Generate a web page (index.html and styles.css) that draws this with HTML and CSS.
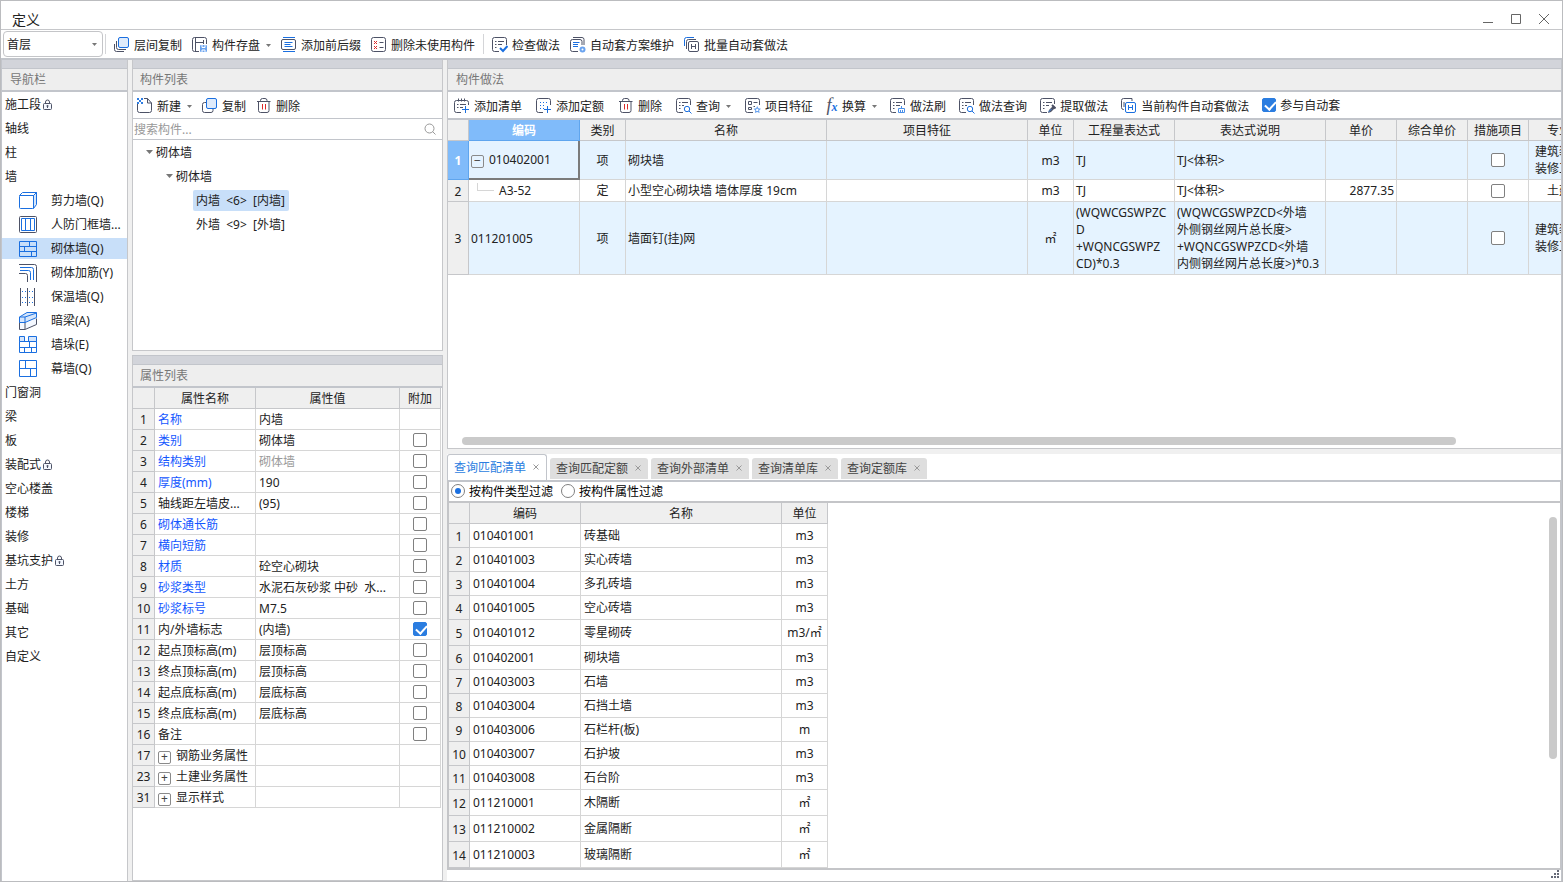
FILE: index.html
```html
<!DOCTYPE html>
<html lang="zh-CN">
<head>
<meta charset="utf-8">
<title>定义</title>
<link rel="stylesheet" href="styles.css">
</head>
<body>
<svg class="defs" aria-hidden="true">
  <symbol id="i-floors" viewBox="0 0 16 16"><path class="d" d="M.5 7v5.500q0 2 2 2H10M2.500 4v6.500q0 2 2 2H12"/><rect class="b fl" x="4.500" y=".5" width="10" height="10" rx="1.500"/></symbol>
  <symbol id="i-save" viewBox="0 0 16 16"><path class="d" d="M7 14.500H2.500q-2 0-2-2v-10q0-2 2-2h10q2 0 2 2V7M3.500 1v13M3.500 5.500h8M11.500 3v4"/><rect class="lb" x="8" y="8" width="7" height="7" rx="1"/><path class="w" d="M10 8v2.500h3V8M10 15v-2h3v2"/></symbol>
  <symbol id="i-affix" viewBox="0 0 16 16"><path class="b" d="M2 .5h12M2 14.500h12M3.500 5.500h8M3.500 7.500h6M3.500 9.500h8"/><rect class="d" x=".5" y="2.500" width="14" height="10" rx="1.500"/></symbol>
  <symbol id="i-unused" viewBox="0 0 16 16"><rect class="d" x=".5" y=".5" width="14" height="14" rx="2"/><path class="d" d="M8.500 5.500h4M8.500 10.500h4"/><path class="r" d="m3 4 3 3M6 4 3 7M3 9l3 3M6 9l-3 3"/></symbol>
  <symbol id="i-check" viewBox="0 0 16 16"><path class="d" d="M7 14.500H2.500q-2 0-2-2v-10q0-2 2-2h10q2 0 2 2V8M3 4.500h1.500M6 4.500h6M3 7.500h1.500M6 7.500h4M3 10.500h1.500"/><path class="b k" d="m8 11 3 3 4.500-5"/></symbol>
  <symbol id="i-scheme" viewBox="0 0 16 16"><path class="d" d="M8 14.500H2.500q-2 0-2-2v-8q0-2 2-2h7.500q2 0 2 2V8M3 .5h9q2 0 2 2V8"/><path class="b" d="M3 5.500h6.500M3 7.500h5M3 9.500h5"/><circle class="lb" cx="12.500" cy="12.500" r="3"/><circle cx="12.500" cy="12.500" r="1" fill="#fff"/></symbol>
  <symbol id="i-batch" viewBox="0 0 16 16"><path class="b" d="M.5 9V2.500q0-2 2-2H10"/><path class="d" d="M2.500 12V4.500q0-2 2-2H12"/><rect class="d" x="4.500" y="4.500" width="10" height="10" rx="1.500"/><path class="d" d="M7.500 7v5M11.500 7v5M7.500 9.500h4"/></symbol>
  <symbol id="i-new" viewBox="0 0 16 16"><path class="d" d="M.5 6v6.500q0 2 2 2h10q2 0 2-2V5l-4-4.500H7M10.500.5V5h4"/><path d="M0 0h2v2H0zM4 0h2v2H4zM2 2h2v2H2zM0 4h2v2H0zM4 4h2v2H4z" fill="#2f7de1"/></symbol>
  <symbol id="i-copy" viewBox="0 0 16 16"><path class="d" d="M5 4.500H2.500q-2 0-2 2v6q0 2 2 2H9q2 0 2-2V11"/><rect class="b fl" x="4.500" y=".5" width="10" height="10" rx="1.500"/></symbol>
  <symbol id="i-trash" viewBox="0 0 16 16"><path class="d" d="M1 3.500h13.500M4.500 3V2.500q0-2 2-2H9q2 0 2 2V3M2.500 4v8.500q0 2 2 2H11q2 0 2-2V4"/><path class="r" d="M6.500 6v5.500M9.500 6v5.500"/></symbol>
  <symbol id="i-addlist" viewBox="0 0 16 16"><path class="d" d="M7 14.500H2.500q-2 0-2-2v-8q0-2 2-2h10q2 0 2 2V7M4.500.5v3M7.500.5v3M10.500.5v3M3 6.500h1.500M6 6.500h6M3 9.500h1.500M6 9.500h3"/><path class="b" d="M11.500 8v7M8 11.500h7"/></symbol>
  <symbol id="i-addquota" viewBox="0 0 16 16"><path class="d" d="M7 14.500H2.500q-2 0-2-2v-10q0-2 2-2h10q2 0 2 2V7"/><path class="b" stroke-dasharray="1 2" d="M4 4.500h8M4 7.500h6M4 10.500h4"/><path class="b" d="M11.500 8v7M8 11.500h7"/></symbol>
  <symbol id="i-query" viewBox="0 0 16 16"><path class="d" d="M7 14.500H2.500q-2 0-2-2v-10q0-2 2-2h10q2 0 2 2V7M3 4.500h1.500M6 4.500h6M3 7.500h1.500M6 7.500h2M3 10.500h1.500"/><circle class="b" cx="11" cy="11" r="2.700"/><path class="b" d="m13 13 2.500 2.500"/></symbol>
  <symbol id="i-feature" viewBox="0 0 16 16"><path class="d" d="M8 14.500H2.500q-2 0-2-2v-10q0-2 2-2h10q2 0 2 2V7M3.500 3.500h3v3h-3zM3.500 9.500h3v2h-3zM8.500 4.500h4M8.500 8.500H10"/><path class="lb" d="m12.200 8 1.200 2.300 2.600.4-1.900 1.800.5 2.600-2.400-1.200-2.300 1.200.4-2.600L8.500 10.700l2.600-.4z"/><circle cx="12.200" cy="11.900" r="1.200" fill="#fff"/></symbol>
  <symbol id="i-brush" viewBox="0 0 16 16"><path class="d" d="M6 14.500H2.500q-2 0-2-2v-10q0-2 2-2h10q2 0 2 2V7M3 4.500h1.500M6 4.500h6M3 7.500h1.500M6 7.500h4M3 10.500h1.500"/><path class="s" d="M11.500 8v2.500M8.500 10.500h6v4h-6zM10.500 12v2.500M12.500 12v2.500"/></symbol>
  <symbol id="i-extract" viewBox="0 0 16 16"><path class="d" d="M7 14.500H2.500q-2 0-2-2v-10q0-2 2-2h10q2 0 2 2V6M3 4.500h1.500M6 4.500h6M3 7.500h1.500M6 7.500h3M3 10.500h1.500"/><path d="m8 15 1-3 4-4 2.500 1.500L11 14z" fill="#4d5266"/><path d="m12 7 3.500 3.500" stroke="#4d5266" stroke-width="2"/><path class="s" d="m8.500 14 3-3"/></symbol>
  <symbol id="i-current" viewBox="0 0 16 16"><path class="d" d="M3 11.500H2.500q-2 0-2-2v-7q0-2 2-2H11V3M3 4v5"/><rect class="b" x="4.500" y="4.500" width="10" height="10" rx="1.500"/><path class="b" d="M7.500 7v5M11.500 7v5M7.500 9.500h4"/></symbol>
  <symbol id="i-search" viewBox="0 0 12 12"><circle cx="5.500" cy="5.500" r="4.500" fill="none" stroke="#999"/><path d="m8.500 8.500 3 3" stroke="#999"/></symbol>
  <symbol id="i-lock" viewBox="0 0 10 12"><rect class="d" x=".5" y="4.500" width="8" height="6" rx="1" fill="#dce9fa"/><path class="d" d="M2.500 4.500V3a2 2 0 0 1 4 0v1.500M4.500 7v2"/><circle cx="4.500" cy="7" r="1" fill="#4d5266"/></symbol>
  <symbol id="i-caret" viewBox="0 0 7 4"><path d="M0 0h7L3.500 4z" fill="#777"/></symbol>
  <symbol id="i-x" viewBox="0 0 6 6"><path d="m.5.5 5 5M5.500.5l-5 5" stroke="#999"/></symbol>
  <symbol id="n-shear" viewBox="0 0 18 18"><path class="b" d="m14.500 3.500 3-3v12l-3 4z" fill="#d6e6fb"/><path class="b" d="m.5 3.500 3-3h14l-3 3z"/><rect class="n" x=".5" y="3.500" width="14" height="13" rx="1"/></symbol>
  <symbol id="n-frame" viewBox="0 0 18 18"><rect class="d" x=".5" y=".5" width="17" height="16" rx="1"/><path class="b" d="M2.500 2.500h13v12h-13zM6.500 2.500v12M11.500 2.500v12"/></symbol>
  <symbol id="n-brick" viewBox="0 0 18 18"><path class="b" d="M.5 1.500h17v15H.5zM.5 6.500h17M.5 11.500h17M10.500 1.500v5M5.500 6.500v5M12.500 11.500v5"/></symbol>
  <symbol id="n-rebar" viewBox="0 0 18 18"><path class="d" d="M0 .5h15.500q2 0 2 2V18M0 9.500h6.500q2 0 2 2V18"/><path class="b" d="M1 3.500h11.500q2 0 2 2V16M1 6.500h8.500q2 0 2 2V16"/></symbol>
  <symbol id="n-insul" viewBox="0 0 18 18"><path class="d" d="M1.500 0v18M8.500 0v18M15.500 0v18"/><path class="b" stroke-dasharray="1 2" d="M3 3.500h5M10 3.500h5M3 9.500h5M10 9.500h5M3 14.500h5M10 14.500h5"/></symbol>
  <symbol id="n-beam" viewBox="0 0 18 18"><path class="d" d="M.5 10v7.500H6l11.500-5V6.500M6 17v-7" fill="#fff"/><path class="b" d="M.5 5 8 .5h9.500v5L6 10.500H.5zM.5 5H6v5.500M6 5l11.500-4M.5 5" fill="#d6e6fb"/></symbol>
  <symbol id="n-pier" viewBox="0 0 18 18"><path class="b" d="M.5.5h5v5h-5zM9.500.5h8v5h-8z" fill="#d6e6fb"/><path class="b" d="M.5 5.500h17v11H.5zM.5 11.500h17M10.500 5.500v6M5.500 11.500v5M12.500 11.500v5"/></symbol>
  <symbol id="n-curtain" viewBox="0 0 18 18"><path class="b" d="M.5.5h17v16H.5zM.5 8.500h17M6.500.5v8M11.500 8.500v8"/></symbol>
</svg>

<div class="window">
  <header class="titlebar">
    <h1>定义</h1>
    <div class="winbtns">
      <button type="button" aria-label="最小化"><svg width="10" height="10"><path d="M0 8.500h10"/></svg></button>
      <button type="button" aria-label="最大化"><svg width="10" height="10"><path d="M.5.5h9v9h-9z"/></svg></button>
      <button type="button" aria-label="关闭"><svg width="10" height="10"><path d="m0 0 10 10M10 0 0 10"/></svg></button>
    </div>
  </header>

  <div class="toolbar main-tools">
    <span class="floor"><select aria-label="楼层"><option>首层</option></select><svg class="caret"><use href="#i-caret"/></svg></span>
    <span class="sep first"></span>
    <button type="button"><svg><use href="#i-floors"/></svg>层间复制</button>
    <button type="button"><svg><use href="#i-save"/></svg>构件存盘<svg class="caret"><use href="#i-caret"/></svg></button>
    <button type="button"><svg><use href="#i-affix"/></svg>添加前后缀</button>
    <button type="button"><svg><use href="#i-unused"/></svg>删除未使用构件</button>
    <span class="sep"></span>
    <button type="button"><svg><use href="#i-check"/></svg>检查做法</button>
    <button type="button"><svg><use href="#i-scheme"/></svg>自动套方案维护</button>
    <button type="button"><svg><use href="#i-batch"/></svg>批量自动套做法</button>
  </div>

  <main class="workspace">
    <nav class="nav">
      <div class="strip"></div>
      <h2>导航栏</h2>
      <ul>
        <li><a href="#">施工段<svg class="lock"><use href="#i-lock"/></svg></a></li>
        <li><a href="#">轴线</a></li>
        <li><a href="#">柱</a></li>
        <li><a href="#">墙</a></li>
        <li><a href="#" class="sub"><svg><use href="#n-shear"/></svg>剪力墙(Q)</a></li>
        <li><a href="#" class="sub"><svg><use href="#n-frame"/></svg>人防门框墙...</a></li>
        <li><a href="#" class="sub on"><svg><use href="#n-brick"/></svg>砌体墙(Q)</a></li>
        <li><a href="#" class="sub"><svg><use href="#n-rebar"/></svg>砌体加筋(Y)</a></li>
        <li><a href="#" class="sub"><svg><use href="#n-insul"/></svg>保温墙(Q)</a></li>
        <li><a href="#" class="sub"><svg><use href="#n-beam"/></svg>暗梁(A)</a></li>
        <li><a href="#" class="sub"><svg><use href="#n-pier"/></svg>墙垛(E)</a></li>
        <li><a href="#" class="sub"><svg><use href="#n-curtain"/></svg>幕墙(Q)</a></li>
        <li><a href="#">门窗洞</a></li>
        <li><a href="#">梁</a></li>
        <li><a href="#">板</a></li>
        <li><a href="#">装配式<svg class="lock"><use href="#i-lock"/></svg></a></li>
        <li><a href="#">空心楼盖</a></li>
        <li><a href="#">楼梯</a></li>
        <li><a href="#">装修</a></li>
        <li><a href="#">基坑支护<svg class="lock"><use href="#i-lock"/></svg></a></li>
        <li><a href="#">土方</a></li>
        <li><a href="#">基础</a></li>
        <li><a href="#">其它</a></li>
        <li><a href="#">自定义</a></li>
      </ul>
    </nav>

    <div class="middle">
      <section class="panel components">
        <div class="strip"></div>
        <h2>构件列表</h2>
        <div class="toolbar">
          <button type="button"><svg><use href="#i-new"/></svg>新建<svg class="caret"><use href="#i-caret"/></svg></button>
          <button type="button"><svg><use href="#i-copy"/></svg>复制</button>
          <button type="button"><svg><use href="#i-trash"/></svg>删除</button>
        </div>
        <div class="search"><input type="text" placeholder="搜索构件..." aria-label="搜索构件"><svg><use href="#i-search"/></svg></div>
        <ul class="tree">
          <li><div class="node"><svg><use href="#i-caret"/></svg>砌体墙</div>
            <ul>
              <li><div class="node"><svg><use href="#i-caret"/></svg>砌体墙</div>
                <ul>
                  <li><span class="leaf on">内墙&nbsp; &lt;6&gt;&nbsp; [内墙]</span></li>
                  <li><span class="leaf">外墙&nbsp; &lt;9&gt;&nbsp; [外墙]</span></li>
                </ul>
              </li>
            </ul>
          </li>
        </ul>
      </section>

      <section class="panel props">
        <div class="strip"></div>
        <h2>属性列表</h2>
        <table class="grid prop-grid">
          <colgroup><col class="w22"><col class="w101"><col><col class="w41"></colgroup>
          <thead><tr><th></th><th>属性名称</th><th>属性值</th><th>附加</th></tr></thead>
          <tbody>
            <tr><th>1</th><td class="link">名称</td><td>内墙</td><td></td></tr>
            <tr><th>2</th><td class="link">类别</td><td>砌体墙</td><td class="c"><input type="checkbox" aria-label="附加 类别"></td></tr>
            <tr><th>3</th><td class="link">结构类别</td><td class="dim">砌体墙</td><td class="c"><input type="checkbox" aria-label="附加 结构类别"></td></tr>
            <tr><th>4</th><td class="link">厚度(mm)</td><td>190</td><td class="c"><input type="checkbox" aria-label="附加 厚度"></td></tr>
            <tr><th>5</th><td>轴线距左墙皮...</td><td>(95)</td><td class="c"><input type="checkbox" aria-label="附加 轴线距左墙皮"></td></tr>
            <tr><th>6</th><td class="link">砌体通长筋</td><td></td><td class="c"><input type="checkbox" aria-label="附加 砌体通长筋"></td></tr>
            <tr><th>7</th><td class="link">横向短筋</td><td></td><td class="c"><input type="checkbox" aria-label="附加 横向短筋"></td></tr>
            <tr><th>8</th><td class="link">材质</td><td>砼空心砌块</td><td class="c"><input type="checkbox" aria-label="附加 材质"></td></tr>
            <tr><th>9</th><td class="link">砂浆类型</td><td>水泥石灰砂浆 中砂&nbsp; 水...</td><td class="c"><input type="checkbox" aria-label="附加 砂浆类型"></td></tr>
            <tr><th>10</th><td class="link">砂浆标号</td><td>M7.5</td><td class="c"><input type="checkbox" aria-label="附加 砂浆标号"></td></tr>
            <tr><th>11</th><td>内/外墙标志</td><td>(内墙)</td><td class="c"><input type="checkbox" checked aria-label="附加 内/外墙标志"></td></tr>
            <tr><th>12</th><td>起点顶标高(m)</td><td>层顶标高</td><td class="c"><input type="checkbox" aria-label="附加 起点顶标高"></td></tr>
            <tr><th>13</th><td>终点顶标高(m)</td><td>层顶标高</td><td class="c"><input type="checkbox" aria-label="附加 终点顶标高"></td></tr>
            <tr><th>14</th><td>起点底标高(m)</td><td>层底标高</td><td class="c"><input type="checkbox" aria-label="附加 起点底标高"></td></tr>
            <tr><th>15</th><td>终点底标高(m)</td><td>层底标高</td><td class="c"><input type="checkbox" aria-label="附加 终点底标高"></td></tr>
            <tr><th>16</th><td>备注</td><td></td><td class="c"><input type="checkbox" aria-label="附加 备注"></td></tr>
            <tr><th>17</th><td><button type="button" class="exp" aria-label="展开">+</button>钢筋业务属性</td><td></td><td></td></tr>
            <tr><th>23</th><td><button type="button" class="exp" aria-label="展开">+</button>土建业务属性</td><td></td><td></td></tr>
            <tr><th>31</th><td><button type="button" class="exp" aria-label="展开">+</button>显示样式</td><td></td><td></td></tr>
          </tbody>
        </table>
      </section>
    </div>

    <div class="right">
      <section class="methods">
        <div class="strip"></div>
        <h2>构件做法</h2>
        <div class="toolbar method-tools">
          <div class="group wide">
            <button type="button"><svg><use href="#i-addlist"/></svg>添加清单</button>
            <button type="button"><svg><use href="#i-addquota"/></svg>添加定额</button>
            <button type="button"><svg><use href="#i-trash"/></svg>删除</button>
            <button type="button"><svg><use href="#i-query"/></svg>查询<svg class="caret"><use href="#i-caret"/></svg></button>
          </div>
          <div class="group">
            <button type="button"><svg><use href="#i-feature"/></svg>项目特征</button>
            <button type="button"><span class="fx">f<b>x</b></span>换算<svg class="caret"><use href="#i-caret"/></svg></button>
            <button type="button"><svg><use href="#i-brush"/></svg>做法刷</button>
            <button type="button"><svg><use href="#i-query"/></svg>做法查询</button>
            <button type="button"><svg><use href="#i-extract"/></svg>提取做法</button>
            <button type="button"><svg><use href="#i-current"/></svg>当前构件自动套做法</button>
            <label class="auto"><input type="checkbox" checked>参与自动套</label>
          </div>
        </div>
        <div class="method-view">
          <table class="grid method-grid">
            <colgroup><col class="w21"><col class="w111"><col class="w46"><col class="w201"><col class="w201"><col class="w46"><col class="w101"><col class="w151"><col class="w71"><col class="w71"><col class="w61"><col class="w61"></colgroup>
            <thead><tr><th></th><th class="sel">编码</th><th>类别</th><th>名称</th><th>项目特征</th><th>单位</th><th>工程量表达式</th><th>表达式说明</th><th>单价</th><th>综合单价</th><th>措施项目</th><th>专业</th></tr></thead>
            <tbody>
              <tr class="item"><th class="sel">1</th><td class="focus"><button type="button" class="exp" aria-label="折叠">−</button>010402001</td><td class="c">项</td><td>砌块墙</td><td></td><td class="c">m3</td><td>TJ</td><td>TJ&lt;体积&gt;</td><td></td><td></td><td class="c"><input type="checkbox" aria-label="措施项目 1"></td><td class="c">建筑装饰<br>装修工程</td></tr>
              <tr class="quota"><th>2</th><td><span class="branch"></span>A3-52</td><td class="c">定</td><td>小型空心砌块墙 墙体厚度 19cm</td><td></td><td class="c">m3</td><td>TJ</td><td>TJ&lt;体积&gt;</td><td class="num">2877.35</td><td></td><td class="c"><input type="checkbox" aria-label="措施项目 2"></td><td class="c">土建</td></tr>
              <tr class="item"><th>3</th><td>011201005</td><td class="c">项</td><td>墙面钉(挂)网</td><td></td><td class="c">㎡</td><td>(WQWCGSWPZC<br>D<br>+WQNCGSWPZ<br>CD)*0.3</td><td>(WQWCGSWPZCD&lt;外墙<br>外侧钢丝网片总长度&gt;<br>+WQNCGSWPZCD&lt;外墙<br>内侧钢丝网片总长度&gt;)*0.3</td><td></td><td></td><td class="c"><input type="checkbox" aria-label="措施项目 3"></td><td class="c">建筑装饰<br>装修工程</td></tr>
            </tbody>
          </table>
        </div>
        <div class="hscroll"><span></span></div>
      </section>

      <section class="queries">
        <div class="tabs">
          <div class="tab on"><button type="button">查询匹配清单</button><button type="button" class="close" aria-label="关闭"><svg><use href="#i-x"/></svg></button></div>
          <div class="tab"><button type="button">查询匹配定额</button><button type="button" class="close" aria-label="关闭"><svg><use href="#i-x"/></svg></button></div>
          <div class="tab"><button type="button">查询外部清单</button><button type="button" class="close" aria-label="关闭"><svg><use href="#i-x"/></svg></button></div>
          <div class="tab"><button type="button">查询清单库</button><button type="button" class="close" aria-label="关闭"><svg><use href="#i-x"/></svg></button></div>
          <div class="tab"><button type="button">查询定额库</button><button type="button" class="close" aria-label="关闭"><svg><use href="#i-x"/></svg></button></div>
        </div>
        <div class="query-body">
          <div class="filters">
            <label><input type="radio" name="filter" checked>按构件类型过滤</label>
            <label><input type="radio" name="filter">按构件属性过滤</label>
          </div>
          <div class="query-view">
            <table class="grid query-grid">
              <colgroup><col class="w21"><col class="w111"><col class="w201"><col class="w46"></colgroup>
              <thead><tr><th></th><th>编码</th><th>名称</th><th>单位</th></tr></thead>
              <tbody>
                <tr><th>1</th><td>010401001</td><td>砖基础</td><td class="c">m3</td></tr>
                <tr><th>2</th><td>010401003</td><td>实心砖墙</td><td class="c">m3</td></tr>
                <tr><th>3</th><td>010401004</td><td>多孔砖墙</td><td class="c">m3</td></tr>
                <tr><th>4</th><td>010401005</td><td>空心砖墙</td><td class="c">m3</td></tr>
                <tr class="tall"><th>5</th><td>010401012</td><td>零星砌砖</td><td class="c">m3/㎡</td></tr>
                <tr><th>6</th><td>010402001</td><td>砌块墙</td><td class="c">m3</td></tr>
                <tr><th>7</th><td>010403003</td><td>石墙</td><td class="c">m3</td></tr>
                <tr><th>8</th><td>010403004</td><td>石挡土墙</td><td class="c">m3</td></tr>
                <tr><th>9</th><td>010403006</td><td>石栏杆(板)</td><td class="c">m</td></tr>
                <tr><th>10</th><td>010403007</td><td>石护坡</td><td class="c">m3</td></tr>
                <tr><th>11</th><td>010403008</td><td>石台阶</td><td class="c">m3</td></tr>
                <tr class="tall"><th>12</th><td>011210001</td><td>木隔断</td><td class="c">㎡</td></tr>
                <tr class="tall"><th>13</th><td>011210002</td><td>金属隔断</td><td class="c">㎡</td></tr>
                <tr class="tall"><th>14</th><td>011210003</td><td>玻璃隔断</td><td class="c">㎡</td></tr>
              </tbody>
            </table>
            <div class="vscroll"><span></span></div>
          </div>
        </div>
        <footer><svg width="8" height="8"><path d="M6 0h2v2H6zM3 3h2v2H3zM6 3h2v2H6zM0 6h2v2H0zM3 6h2v2H3zM6 6h2v2H6z"/></svg></footer>
      </section>
    </div>
  </main>
</div>
</body>
</html>
```

FILE: styles.css
```css
* { box-sizing: border-box; }

body, button, input, select {
  font-family: "Noto Sans", "Noto Sans CJK SC", sans-serif;
  font-size: 12px;
  line-height: 17px;
  color: #222;
}

body { margin: 0; background: #fff; }
button { margin: 0; padding: 0; border: 0; background: none; white-space: nowrap; }
h1, h2, ul { margin: 0; padding: 0; font-weight: 400; }
ul { list-style: none; }
a { color: inherit; text-decoration: none; }
svg { display: block; flex: none; }

.defs { position: absolute; width: 0; height: 0; }
.d, .b, .n, .r, .w, .s { fill: none; stroke-width: 1; }
.d { stroke: #4d5266; }
.b, .n { stroke: #1a6fe0; }
.b[fill] { fill: #d6e6fb; }
.d[fill] { fill: #f4f8ff; }
.b.k { stroke-width: 2; }
.r { stroke: #dc2a2a; }
.w { stroke: #fff; }
.s { stroke: #4a8fe8; }
.fl { fill: #dfebfb; }
.lb { fill: #6aa3ef; }

.window {
  display: flex;
  flex-direction: column;
  height: 100vh;
  border: 1px solid #bbbcbf;
  overflow: hidden;
}

.titlebar {
  display: flex;
  justify-content: space-between;
  height: 29px;
  flex: none;
  padding: 9px 13px 0 11px;
  border-bottom: 1px solid #c6c7ca;
}
.titlebar h1 { font-size: 14px; line-height: 20px; }
.winbtns { display: flex; gap: 18px; padding-top: 4px; }
.winbtns button { height: 10px; }
.winbtns path { fill: none; stroke: #666; }

.toolbar { display: flex; align-items: center; height: 28px; flex: none; gap: 10px; background: #fff; }
.toolbar button { display: flex; align-items: center; gap: 4px; padding-top: 2px; }
.toolbar button svg { width: 16px; height: 16px; }
.toolbar svg.caret { width: 5px; height: 3px; margin-left: 2px; }
.main-tools { padding-left: 2px; }
.main-tools .sep { width: 1px; height: 20px; margin: 0 -2px; background: #d4d5d8; }
.main-tools .sep.first { margin: 0 -2px 0 -8px; }
.floor { display: flex; align-items: center; width: 100px; height: 26px; border: 1px solid #c4c5c8; border-radius: 4px; }
.floor select { flex: 1; min-width: 0; height: 24px; padding: 0 3px; border: 0; background: none; appearance: none; }
.floor svg.caret { margin-right: 5px; }

.workspace {
  display: flex;
  flex: 1;
  min-height: 0;
  border: solid #c2c5cb;
  border-width: 2px 1px 0;
  background: #f0f0f0;
}
.strip { height: 9px; flex: none; background: #d2d4da; border-bottom: 1px solid #c2c5cb; }
h2 { height: 23px; flex: none; padding: 2px 8px 0; font-size: 12px; color: #777; background: #eee; border-bottom: 2px solid #c2c5cb; }
.panel h2 { padding-left: 7px; }

.nav { width: 126px; flex: none; margin-right: 4px; border-right: 1px solid #c6c7ca; background: #fff; overflow: hidden; }
.nav ul { display: grid; gap: 3px; padding-top: 2px; }
.nav a { display: flex; align-items: center; height: 21px; padding-left: 3px; white-space: nowrap; }
.nav a.sub { gap: 14px; padding-left: 17px; }
.nav a.on { background: #c8dff9; }
.nav svg { width: 18px; height: 18px; }
.nav svg.lock { width: 10px; height: 12px; margin-left: 2px; }

.middle { display: flex; flex-direction: column; gap: 4px; width: 311px; flex: none; margin-right: 4px; }
.panel { display: flex; flex-direction: column; min-height: 0; border: 1px solid #c6c7ca; border-top: 0; background: #fff; }
.components { flex: 291 1 0; }
.props { flex: 526 1 0; border-top: 1px solid #c2c5cb; overflow: hidden; }
.components .toolbar { height: 27px; padding-left: 4px; border-bottom: 1px solid #c2c5cb; }
.search { display: flex; align-items: center; height: 21px; flex: none; padding: 0 6px 0 1px; border-bottom: 1px solid #c2c5cb; }
.search input { flex: 1; min-width: 0; height: 19px; padding: 0; border: 0; outline: 0; background: none; }
.search input::placeholder { color: #999; opacity: 1; }
.search svg { width: 12px; height: 12px; }

.node { display: flex; align-items: center; gap: 3px; height: 24px; padding-left: 13px; }
.node svg { width: 7px; height: 4px; }
.tree ul { padding-left: 20px; }
.tree ul ul { padding-left: 40px; }
.tree ul ul li { display: flex; align-items: center; height: 24px; }
.leaf { height: 21px; padding: 2px 4px 0 3px; border-radius: 2px; white-space: nowrap; }
.leaf.on { background: #c8dff9; }

.grid { border-collapse: separate; border-spacing: 0; table-layout: fixed; }
.grid th, .grid td { height: 21px; padding: 0 3px; border: solid #d6d6d6; border-width: 0 1px 1px 0; text-align: left; white-space: nowrap; overflow: hidden; }
.grid th { padding: 0; font-weight: 400; text-align: center; background: #efefef; border-color: #c6c7ca; }
.grid .c { padding: 0; text-align: center; }
.grid .num { text-align: right; padding-right: 2px; }
.grid td input { display: block; margin: 0 auto; }
.w21 { width: 21px; }
.w22 { width: 22px; }
.w41 { width: 41px; }
.w46 { width: 46px; }
.w61 { width: 61px; }
.w71 { width: 71px; }
.w101 { width: 101px; }
.w111 { width: 111px; }
.w151 { width: 151px; }
.w201 { width: 201px; }

.prop-grid { width: 308px; }
.prop-grid th, .prop-grid td { padding-top: 2px; }
.grid td.link { color: #1457ff; }
.grid td.dim { color: #999; }

input[type="checkbox"], input[type="radio"] { appearance: none; flex: none; width: 14px; height: 14px; margin: 0; border: 1px solid #808080; border-radius: 2px; background: #fff; }
input[type="checkbox"]:checked { border-color: #2b7de0; background: #2b7de0; }
input[type="checkbox"]:checked::after { content: ""; display: block; width: 5px; height: 9px; margin: 0 0 0 4px; border: solid #fff; border-width: 0 2px 2px 0; transform: rotate(42deg); }
input[type="radio"] { border-radius: 50%; }
input[type="radio"]:checked::after { content: ""; display: block; width: 6px; height: 6px; margin: 3px; border-radius: 50%; background: #1a6fe0; }

.exp { width: 13px; height: 13px; margin-right: 5px; border: 1px solid #8a8a8a; border-radius: 2px; line-height: 10px; vertical-align: -1px; color: #444; }

.right { display: flex; flex-direction: column; flex: 1; min-width: 0; gap: 5px; }
.methods { display: flex; flex-direction: column; flex: 388 1 0; min-height: 0; border-left: 1px solid #c6c7ca; border-bottom: 1px solid #c6c7ca; background: #fff; }
.method-tools { gap: 14px; padding-left: 6px; border-bottom: 2px solid #c2c5cb; }
.group { display: flex; align-items: center; gap: 13px; }
.group.wide { gap: 14px; }
.fx { width: 12px; font: italic 18px/16px "Liberation Serif", serif; color: #4d5266; }
.fx b { font-size: 12px; color: #1a6fe0; }
.auto { display: flex; align-items: center; gap: 4px; white-space: nowrap; }
.method-view { flex: 1; min-height: 0; overflow: hidden; }
.method-grid { width: 1142px; }
.method-grid .item td { padding: 2px; background: #e5f3ff; }
.method-grid .quota td { height: 22px; padding: 0 2px; }
.method-grid .quota th { padding-top: 2px; }
.method-grid th.sel { color: #fff; font-weight: 700; background: #80bbfa; border-color: #5fa5ee; }
.method-grid td.focus { border: solid #7b7b7b; border-width: 0 2px 2px 0; }
.branch { display: inline-block; width: 17px; height: 8px; margin: 0 5px 0 6px; border: solid #d6d6d6; border-width: 0 0 1px 1px; vertical-align: 4px; }
.hscroll { flex: none; padding: 0 105px 3px 14px; }
.hscroll span { display: block; height: 8px; border-radius: 4px; background: #cacaca; }

.queries { display: flex; flex-direction: column; flex: 428 1 0; min-height: 0; background: #fff; }
.tabs { display: flex; align-items: flex-end; gap: 3px; height: 26px; flex: none; }
.tab { display: flex; align-items: center; gap: 7px; height: 21px; margin-bottom: 1px; padding: 0 7px 0 6px; border-radius: 3px 3px 0 0; background: #dedede; }
.tab button { color: #444; }
.tab svg { width: 6px; height: 6px; }
.tab.on { height: 26px; margin-bottom: 0; border: 1px solid #c2c5cb; border-bottom: 0; background: #fff; }
.tab.on button { color: #2b7de0; }
.query-body { display: flex; flex-direction: column; flex: 1; min-height: 0; border: 2px solid #c4c5c8; border-right-width: 1px; border-top-color: #c2c5cb; }
.filters { display: flex; align-items: center; gap: 8px; height: 21px; flex: none; padding-left: 2px; border-bottom: 2px solid #c4c5c8; }
.filters label { display: flex; align-items: center; gap: 4px; color: #000; }
.query-view { display: flex; justify-content: space-between; flex: 1; min-height: 0; overflow: hidden; }
.query-grid { width: 379px; align-self: flex-start; }
.query-grid tbody th, .query-grid tbody td { height: 24px; }
.query-grid tbody .tall th, .query-grid tbody .tall td { height: 26px; }
.query-grid th { padding-top: 2px; }
.vscroll { padding: 14px 3px 0 0; }
.vscroll span { display: block; width: 8px; height: 69%; border-radius: 4px; background: #cacaca; }

footer { display: flex; justify-content: flex-end; height: 11px; flex: none; padding-right: 2px; }
footer path { fill: #666b78; }
```
